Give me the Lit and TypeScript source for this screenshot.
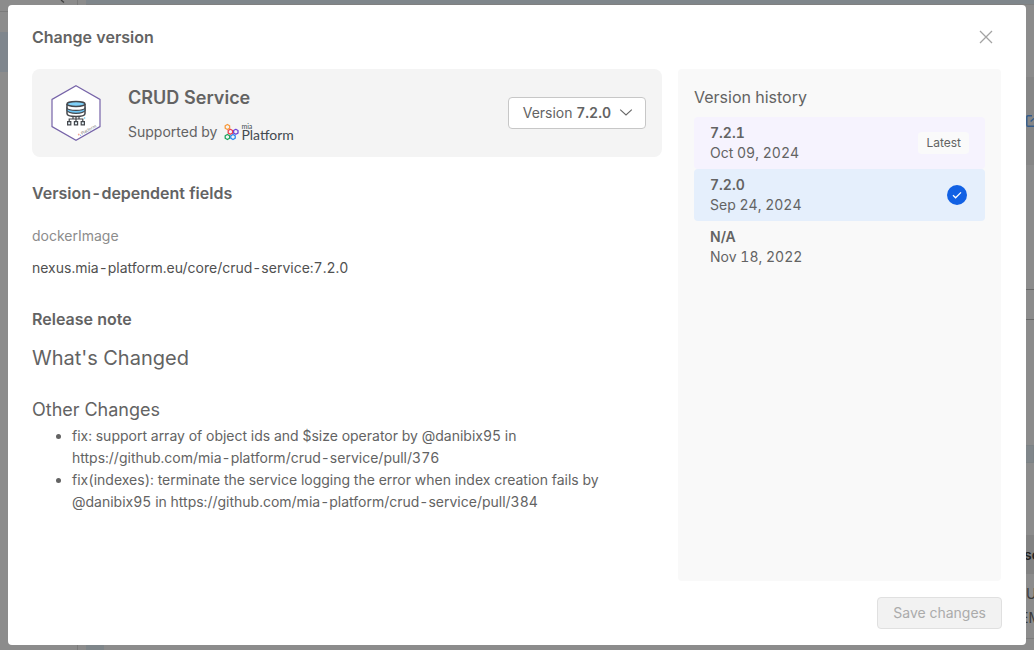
import { LitElement, html, css, svg } from "lit";
import { customElement, state } from "lit/decorators.js";
import { classMap } from "lit/directives/class-map.js";

interface Release {
  version: string;
  date: string;
  latest?: boolean;
}

const RELEASES: Release[] = [
  { version: "7.2.1", date: "Oct 09, 2024", latest: true },
  { version: "7.2.0", date: "Sep 24, 2024" },
  { version: "N/A", date: "Nov 18, 2022" },
];

const NOTES = [
  "fix: support array of object ids and $size operator by @danibix95 in https://github.com/mia-platform/crud-service/pull/376",
  "fix(indexes): terminate the service logging the error when index creation fails by @danibix95 in https://github.com/mia-platform/crud-service/pull/384",
];

const ring = (x: number, y: number, color: string) => svg`
  <path transform="translate(${x} ${y})" fill="none" stroke=${color} stroke-width="1.3" stroke-linejoin="round"
    d="M0 -2.5L2.2 -1.3V1.3L0 2.5L-2.2 1.3V-1.3Z" />`;

@customElement("page-behind")
export class PageBehind extends LitElement {
  static styles = css`
    :host {
      display: grid;
      grid-template-columns: 78px 1fr;
      height: 100%;
      overflow: hidden;
      background: #8c8c8c;
      color: #3b3b3b;
      font: 14px/22px Inter, sans-serif;
    }
    .side {
      border-right: 1px solid #7b7b7b;
      box-sizing: border-box;
    }
    .search {
      height: 11px;
      border-bottom: 1px solid #7b7b7b;
      display: flex;
      justify-content: flex-end;
      padding-right: 11px;
    }
    .search svg {
      display: block;
    }
    .selected {
      margin-top: 20px;
      height: 40px;
      background: #7f868d;
    }
    .main {
      display: flex;
      flex-direction: column;
      min-width: 0;
      padding-left: 8px;
    }
    .top {
      height: 4px;
      flex: none;
      background: #7f868b;
      border-bottom: 1px solid #808080;
    }
    .band {
      margin-top: 72px;
      height: 88px;
      flex: none;
      background: #868686;
      display: flex;
      align-items: center;
      justify-content: flex-end;
    }
    .box {
      margin-top: 124px;
      height: 29px;
      flex: none;
      border-top: 1px solid #686868;
      border-bottom: 1px solid #686868;
    }
    .info {
      margin-top: 125px;
      height: 16px;
      flex: none;
      background: #80868a;
      border: 1px solid #7c8285;
    }
    .head,
    .row {
      display: flex;
      flex-direction: column;
      align-items: flex-end;
      justify-content: center;
      flex: none;
    }
    .head {
      margin-top: 72px;
      height: 39px;
      background: #828282;
      font-weight: 600;
      color: #222;
    }
    .row {
      height: 64px;
      line-height: 24px;
      border-bottom: 1px solid #7c7c7c;
    }
    .tail {
      width: 18px;
      flex: 1;
      background: #7f868a;
    }
    .clip {
      width: 8px;
      overflow: hidden;
      white-space: nowrap;
    }
    .head .clip {
      width: 10px;
    }
    .wide {
      width: 14px;
    }
  `;

  render() {
    return html`
      <div class="side">
        <div class="search">
          <svg width="6" height="3" viewBox="0 0 6 3"><path d="M1 0L4 2.5" stroke="#444" stroke-width="1.4" /></svg>
        </div>
        <div class="selected"></div>
      </div>
      <div class="main">
        <div class="top"></div>
        <div class="band">
          <svg width="8" height="12" viewBox="0 0 8 12" fill="none" stroke="#335c8b" stroke-width="1.4">
            <path d="M6 .8H2Q.8 .8 .8 2V10Q.8 11.2 2 11.2H8M4.6 6.6L8 3.4" />
          </svg>
        </div>
        <div class="box"></div>
        <div class="info"></div>
        <div class="head"><span class="clip">so</span></div>
        <div class="row"><span class="clip">U</span><span class="clip wide">EM</span></div>
        <div class="tail"></div>
      </div>
    `;
  }
}

@customElement("app-root")
export class AppRoot extends LitElement {
  static styles = css`
    :host {
      display: block;
      position: relative;
      height: 100vh;
      overflow: hidden;
      font: 14px/22px Inter, sans-serif;
      font-variant-numeric: tabular-nums;
      color: #636363;
    }
    * {
      box-sizing: border-box;
    }
    h2,
    h3,
    h4,
    p,
    ul,
    dl,
    dd {
      margin: 0;
    }
    button {
      font: inherit;
      font-variant-numeric: inherit;
      color: inherit;
      cursor: pointer;
    }
    svg {
      display: block;
      flex: none;
    }
    .modal {
      position: absolute;
      inset: 5px 8px;
      display: flex;
      flex-direction: column;
      background: #fff;
      border-radius: 4px;
    }
    .header {
      display: flex;
      align-items: center;
      justify-content: space-between;
      height: 64px;
      padding: 0 24px;
    }
    .heading {
      font-size: 16px;
      line-height: 24px;
      font-weight: 600;
    }
    .close {
      display: grid;
      place-items: center;
      width: 32px;
      height: 32px;
      padding: 0;
      border: 0;
      background: none;
    }
    .body {
      flex: 1;
      min-height: 0;
      display: grid;
      grid-template-columns: 630fr 323fr;
      gap: 16px;
      padding: 0 25px 0 24px;
    }
    .card {
      display: flex;
      align-items: center;
      gap: 24px;
      padding: 16px;
      height: 88px;
      background: #f4f4f4;
      border-radius: 8px;
    }
    .about {
      flex: 1;
      display: flex;
      flex-direction: column;
      gap: 11px;
      padding-top: 3px;
    }
    .name {
      font-size: 18px;
      line-height: 24px;
      font-weight: 600;
    }
    .support {
      display: flex;
      align-items: center;
      gap: 7px;
    }
    .brand {
      display: flex;
      align-items: center;
      gap: 1px;
      color: #434a4f;
    }
    .wordmark {
      display: flex;
      flex-direction: column;
      font-family: Lato, sans-serif;
      font-size: 14px;
      line-height: 12px;
    }
    .mia {
      font-size: 7px;
      line-height: 6px;
    }
    .picker {
      display: flex;
      align-items: center;
      gap: 8px;
      height: 32px;
      padding: 0 12px 0 14px;
      border: 1px solid #c7c7c7;
      border-radius: 4px;
      background: #fff;
    }
    .picker b,
    .entry b {
      font-weight: 600;
    }
    .section {
      margin-top: 24px;
    }
    .fields {
      margin-top: 20px;
    }
    .fields dt {
      color: #8c8c8c;
    }
    .fields dd {
      margin-top: 10px;
      color: #505050;
    }
    .release {
      margin-top: 28px;
    }
    .changed {
      margin-top: 13px;
      font-size: 20px;
      line-height: 28px;
      font-weight: 400;
    }
    .other {
      margin-top: 24px;
      font-size: 18px;
      line-height: 28px;
      font-weight: 400;
    }
    .notes {
      margin-top: 1px;
      padding-left: 40px;
    }
    .history {
      padding: 16px;
      background: #f9f9f9;
      border-radius: 4px;
    }
    .subtitle {
      font-size: 16px;
      line-height: 24px;
      font-weight: 400;
    }
    .list {
      margin-top: 8px;
      padding: 0;
      list-style: none;
    }
    .entry {
      display: flex;
      align-items: center;
      justify-content: space-between;
      width: 100%;
      height: 52px;
      padding: 0 16px;
      border: 0;
      border-radius: 4px;
      background: none;
      text-align: left;
      line-height: 20px;
    }
    .entry.latest {
      background: #f6f3fe;
    }
    .entry.current {
      background: #e5effc;
    }
    .when {
      display: flex;
      flex-direction: column;
    }
    .tag {
      padding: 0 8px;
      border-radius: 4px;
      background: #fafafa;
      font-size: 12px;
      line-height: 22px;
    }
    .footer {
      display: flex;
      justify-content: flex-end;
      padding: 16px 24px;
    }
    .save {
      height: 32px;
      padding: 0 15px;
      border: 1px solid #e0e0e0;
      border-radius: 4px;
      background: #f2f2f2;
      color: #ababab;
      cursor: not-allowed;
    }
  `;

  @state() private current = "7.2.0";

  private renderEntry(r: Release) {
    const current = r.version === this.current;
    return html`<li>
      <button
        class=${classMap({ entry: true, latest: !!r.latest, current })}
        @click=${() => (this.current = r.version)}
      >
        <span class="when"><b>${r.version}</b><span>${r.date}</span></span>
        ${current
          ? html`<svg width="24" height="24" viewBox="0 0 24 24" aria-label="Selected">
              <circle cx="12" cy="12" r="10" fill="#1261e4" />
              <path d="M8 12.2L10.6 14.8L16 9.4" fill="none" stroke="#fff" stroke-width="1.3" />
            </svg>`
          : r.latest
            ? html`<span class="tag">Latest</span>`
            : ""}
      </button>
    </li>`;
  }

  render() {
    return html`
      <page-behind aria-hidden="true"></page-behind>
      <section class="modal" role="dialog" aria-labelledby="title">
        <header class="header">
          <h2 class="heading" id="title">Change version</h2>
          <button class="close" aria-label="Close">
            <svg width="14" height="14" viewBox="0 0 14 14" stroke="#a3a3a3" stroke-width="1.3">
              <path d="M1 1L13 13M13 1L1 13" />
            </svg>
          </button>
        </header>
        <div class="body">
          <div>
            <div class="card">
              <svg width="56" height="56" viewBox="0 0 56 56" fill="none">
                <path d="M28 .8L52 14.4V41.6L28 55.2L4 41.6V14.4Z" fill="#fff" stroke="#7663a8" stroke-width="1.2" />
                <g stroke="#44474c" stroke-width="1.5">
                  <path d="M19 19V28.6C19 30.8 23 31.6 28 31.6S37 30.8 37 28.6V19" fill="#fff" />
                  <path d="M19 23.3C20 25 24 25.4 28 25.4S36 25 37 23.3V25.6C36 27.8 32 28.4 28 28.4S20 27.8 19 25.6Z" fill="#6ec6f5" stroke-width="1.1" />
                  <ellipse cx="28" cy="19" rx="9" ry="2.4" fill="#7fd0f8" />
                  <path d="M28 31.6V37M21.2 37V34H34.8V37M25 34V31.8M31 34V31.8" stroke-width="1.2" />
                  <path d="M19.6 36.6H22.8V39.8H19.6ZM26.4 36.6H29.6V39.8H26.4ZM33.2 36.6H36.4V39.8H33.2Z" fill="#e8f4fa" stroke-width="1.2" />
                </g>
                <circle cx="36.6" cy="33" r=".8" fill="#59c7f2" />
                <g transform="translate(31 50) rotate(-29)">
                  <circle cx="0" cy="-.5" r=".9" fill="#f2a694" />
                  <circle cx="1.2" cy="1" r=".7" fill="#9bb8ef" />
                  <text x="2.5" y="1.5" font-family="Open Sans, sans-serif" font-size="4.2" fill="#666">Platform</text>
                </g>
              </svg>
              <div class="about">
                <h3 class="name">CRUD Service</h3>
                <div class="support">
                  <span>Supported by</span>
                  <span class="brand">
                    <svg width="16" height="18" viewBox="0 0 16 18">
                      ${ring(3.4, 4, "#f7993a")} ${ring(6.4, 8.8, "#ee3f4f")} ${ring(11.8, 8.8, "#6c43d8")}
                      ${ring(3.4, 14, "#1ca35c")} ${ring(9, 14, "#2586ed")}
                    </svg>
                    <span class="wordmark"><span class="mia">mia</span><span>Platform</span></span>
                  </span>
                </div>
              </div>
              <button class="picker">
                <span>Version <b>${this.current}</b></span>
                <svg width="14" height="14" viewBox="0 0 14 14" fill="none" stroke="#666" stroke-width="1.1">
                  <path d="M1.2 3.6L7 9L12.8 3.6" />
                </svg>
              </button>
            </div>
            <h3 class="heading section">Version-dependent fields</h3>
            <dl class="fields">
              <dt>dockerImage</dt>
              <dd>nexus.mia-platform.eu/core/crud-service:${this.current}</dd>
            </dl>
            <h3 class="heading release">Release note</h3>
            <h3 class="changed">What's Changed</h3>
            <h4 class="other">Other Changes</h4>
            <ul class="notes">
              ${NOTES.map((n) => html`<li>${n}</li>`)}
            </ul>
          </div>
          <aside class="history">
            <h3 class="subtitle">Version history</h3>
            <ul class="list">
              ${RELEASES.map((r) => this.renderEntry(r))}
            </ul>
          </aside>
        </div>
        <footer class="footer"><button class="save" disabled>Save changes</button></footer>
      </section>
    `;
  }
}
